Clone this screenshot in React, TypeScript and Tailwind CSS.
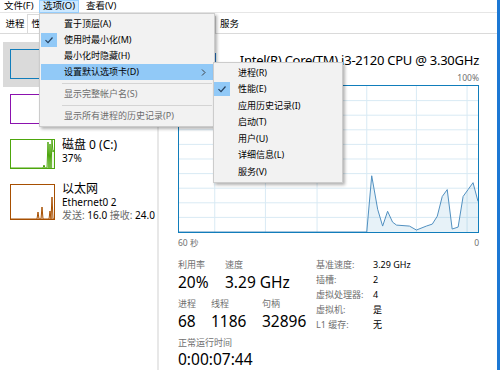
import React from "react";

const cpuLine: [number, number][] = [
  [0, 148], [189, 148], [194, 91], [200, 125], [205, 142], [210, 127], [215, 138],
  [219, 141], [232, 142], [239, 146], [249, 142], [255, 140], [260, 132], [265, 112],
  [270, 105], [275, 145], [281, 143], [286, 112], [291, 105], [296, 98], [301, 117],
];

function Check() {
  return (
    <svg width="16" height="14" viewBox="0 0 16 14" className="block">
      <path d="M4.5 7.2 L7 9.7 L11.5 4.5" fill="none" stroke="#25405e" strokeWidth="1.2" />
    </svg>
  );
}

function CpuChart() {
  const pts = cpuLine.map(([x, y]) => `${x},${y}`).join(" ");
  const rows = [1, 2, 3, 4, 5, 6, 7, 8, 9].map((i) => i * 14.8);
  const cols = [36, 87, 139, 189, 239, 290];
  return (
    <div className="h-[148px] w-[301px] border border-[#117dbb]">
      <svg width="299" height="146" viewBox="0 0 301 148" preserveAspectRatio="none" className="block">
        {rows.map((y) => (
          <line key={y} x1="0" x2="301" y1={y} y2={y} stroke="#d9eaf4" strokeWidth="1" />
        ))}
        {cols.map((x) => (
          <line key={x} x1={x} x2={x} y1="0" y2="148" stroke="#d9eaf4" strokeWidth="1" />
        ))}
        <polygon points={`${pts} 301,148`} fill="rgba(17,125,187,0.1)" />
        <polyline points={pts} fill="none" stroke="#4f8fbf" strokeWidth="1" />
      </svg>
    </div>
  );
}

function MiniGraph({ border, color, fill, h, points }: { border: string; color: string; fill: string; h: number; points: string }) {
  return (
    <div className={`ml-[10px] w-[45px] shrink-0 border ${border}`} style={{ height: h }}>
      {points && (
        <svg width="43" height={h - 2} viewBox={`0 0 43 ${h - 2}`} className="block">
          <polygon points={`${points} 43,${h - 2}`} fill={fill} />
          <polyline points={points} fill="none" stroke={color} strokeWidth="1" />
        </svg>
      )}
    </div>
  );
}

export default function App() {
  return (
    <div className="relative flex h-[370px] w-[500px] overflow-hidden bg-white font-['Noto_Sans','Noto_Sans_CJK_SC',sans-serif] text-black">
      <div className="flex w-[497px] flex-col">
        {/* menu bar */}
        <div className="flex h-[13px] items-center border-b border-[#e6e6e6] text-[9.5px] leading-none">
          <span className="w-[39px] pl-[4px]">文件(F)</span>
          <span className="flex h-[13px] w-[40px] items-center justify-center border border-[#99d1ff] bg-[#cce8ff]">选项(O)</span>
          <span className="pl-[7px]">查看(V)</span>
        </div>

        {/* tabs */}
        <div className="flex h-[21px] items-end border-b border-[#dadada] pl-[3px] text-[9.5px]">
          <div className="flex h-[17px] w-[24px] items-center justify-center">进程</div>
          <div className="flex h-[19px] w-[28px] items-center justify-center border border-b-0 border-[#dadada] bg-white">性能</div>
          <div className="flex h-[17px] w-[62px] items-center justify-center">应用历史记录</div>
          <div className="flex h-[17px] w-[26px] items-center justify-center">启动</div>
          <div className="flex h-[17px] w-[26px] items-center justify-center">用户</div>
          <div className="flex h-[17px] w-[47px] items-center justify-center border-r border-[#dadada]">详细信息</div>
          <div className="flex h-[17px] w-[27px] items-center justify-center">服务</div>
        </div>

        <div className="flex flex-1">
          {/* left list */}
          <div className="w-[159px] shrink-0 overflow-hidden border-r-2 border-[#e8e8e8] pt-[8px]">
            <div className="ml-[3px] flex h-[45px] bg-[#dadada] pt-[7px]">
              <div className="-ml-[3px] flex">
                <MiniGraph border="border-[#117dbb]" color="#117dbb" fill="rgba(17,125,187,0.1)" h={30} points="" />
              </div>
              <div className="ml-[7px] text-[12px] leading-[14px]">
                <div>CPU</div>
                <div className="text-[10px] leading-[12px]">20% 3.29 GHz</div>
              </div>
            </div>
            <div className="flex h-[45px] pt-[7px]">
              <MiniGraph border="border-[#8b12ae]" color="#8b12ae" fill="rgba(139,18,174,0.1)" h={30} points="" />
              <div className="ml-[7px] text-[12px] leading-[14px]">
                <div>内存</div>
                <div className="text-[10px] leading-[12px]">1.2/2.0 GB (60%)</div>
              </div>
            </div>
            <div className="flex h-[45px] pt-[7px]">
              <MiniGraph
                border="border-[#4da60c]"
                color="#4da60c"
                fill="rgba(77,166,12,0.1)"
                h={30}
                points="0,28 32,28 33,25 34,28 36,28 37,2 38,28 39,4 40,28 41,0 42,12 43,10"
              />
              <div className="ml-[7px] -mt-[1px] text-[12px] leading-[14px]">
                <div>磁盘 0 (C:)</div>
                <div className="text-[10px] leading-[12px]">37%</div>
              </div>
            </div>
            <div className="flex h-[45px] pt-[7px]">
              <MiniGraph
                border="border-[#a74f01]"
                color="#a74f01"
                fill="rgba(167,79,1,0.1)"
                h={36}
                points="0,34 26,34 27,27 28,34 30,34 31,22 32,34 38,34 39,26 40,34 41,12 42,34 43,34"
              />
              <div className="ml-[7px] -mt-[2px] whitespace-nowrap text-[12px] leading-[14px]">
                <div>以太网</div>
                <div className="text-[10px] leading-[12.5px]">Ethernet0 2</div>
                <div className="text-[10px] leading-[12.5px]">
                  <span className="text-[#6b6b6b]">发送: </span>16.0 <span className="text-[#6b6b6b]">接收: </span>24.0 Kbps
                </div>
              </div>
            </div>
          </div>

          {/* right detail */}
          <div className="flex-1 overflow-hidden pl-[19px] pr-[18px] pt-[16px]">
            <div className="flex h-[20px] items-center justify-between">
              <span className="text-[20px] leading-none">CPU</span>
              <span className="whitespace-nowrap text-[13px] leading-none tracking-[-0.25px]">Intel(R) Core(TM) i3-2120 CPU @ 3.30GHz</span>
            </div>
            <div className="flex h-[13px] items-end justify-between text-[8.5px] leading-[10px] text-[#707070]">
              <span>% 利用率</span>
              <span>100%</span>
            </div>
            <div className="mt-[2px]">
              <CpuChart />
            </div>
            <div className="mt-[4px] flex h-[12px] items-center justify-between text-[8.5px] text-[#707070]">
              <span>60 秒</span>
              <span>0</span>
            </div>

            <div className="mt-[10px] flex items-start">
              <div className="w-[138px] shrink-0">
                <div className="flex">
                  <div className="w-[47px]">
                    <div className="text-[9px] leading-[12px] text-[#707070]">利用率</div>
                    <div className="mt-[1px] text-[15.5px] leading-[20px]">20%</div>
                  </div>
                  <div>
                    <div className="text-[9px] leading-[12px] text-[#707070]">速度</div>
                    <div className="mt-[1px] whitespace-nowrap text-[15.5px] leading-[20px]">3.29 GHz</div>
                  </div>
                </div>
                <div className="mt-[6px] flex">
                  <div className="w-[33px]">
                    <div className="text-[9px] leading-[12px] text-[#707070]">进程</div>
                    <div className="mt-[1px] text-[15.5px] leading-[20px]">68</div>
                  </div>
                  <div className="w-[51px]">
                    <div className="text-[9px] leading-[12px] text-[#707070]">线程</div>
                    <div className="mt-[1px] text-[15.5px] leading-[20px]">1186</div>
                  </div>
                  <div>
                    <div className="text-[9px] leading-[12px] text-[#707070]">句柄</div>
                    <div className="mt-[1px] text-[15.5px] leading-[20px]">32896</div>
                  </div>
                </div>
                <div className="mt-[6px] text-[9px] leading-[12px] text-[#707070]">正常运行时间</div>
                <div className="text-[15.5px] leading-[20px]">0:00:07:44</div>
              </div>
              <div className="-mt-[2px] grid grid-cols-[57px_1fr] content-start text-[9px] leading-[15px]">
                <span className="text-[#707070]">基准速度:</span>
                <span>3.29 GHz</span>
                <span className="text-[#707070]">插槽:</span>
                <span>2</span>
                <span className="text-[#707070]">虚拟处理器:</span>
                <span>4</span>
                <span className="text-[#707070]">虚拟机:</span>
                <span>是</span>
                <span className="text-[#707070]">L1 缓存:</span>
                <span>无</span>
              </div>
            </div>
          </div>
        </div>
      </div>
      <div className="w-[3px] bg-[#1c78d4]" />

      {/* options menu */}
      <div className="absolute left-[39px] top-[13px] w-[176px] border border-[#cccccc] bg-[#f2f2f2] py-[2px] text-[9px] shadow-[2px_2px_3px_rgba(0,0,0,0.3)]">
        <div className="flex h-[16px] items-center pl-[24px]">置于顶层(A)</div>
        <div className="flex h-[16px] items-center">
          <div className="ml-[1px] w-[16px] bg-[#91c9f7]">
            <Check />
          </div>
          <span className="pl-[7px]">使用时最小化(M)</span>
        </div>
        <div className="flex h-[16px] items-center pl-[24px]">最小化时隐藏(H)</div>
        <div className="mx-[1px] flex h-[16px] items-center justify-between bg-[#91c9f7] pl-[23px] pr-[7px]">
          <span>设置默认选项卡(D)</span>
          <svg width="5" height="7" viewBox="0 0 5 7">
            <path d="M1 0.5 L4 3.5 L1 6.5" fill="none" stroke="#333" strokeWidth="0.9" />
          </svg>
        </div>
        <div className="flex h-[6px] items-center pl-[22px] pr-[2px]">
          <div className="h-px w-full bg-[#d4d4d4]" />
        </div>
        <div className="flex h-[16px] items-center pl-[24px] text-[#6d6d6d]">显示完整帐户名(S)</div>
        <div className="flex h-[6px] items-center pl-[22px] pr-[2px]">
          <div className="h-px w-full bg-[#d4d4d4]" />
        </div>
        <div className="flex h-[16px] items-center pl-[24px] text-[#6d6d6d]">显示所有进程的历史记录(P)</div>
      </div>

      {/* submenu */}
      <div className="absolute left-[213px] top-[62px] w-[130px] border border-[#cccccc] bg-[#f2f2f2] pb-[2px] pt-[1px] text-[9px] shadow-[2px_2px_3px_rgba(0,0,0,0.3)]">
        {["进程(R)", "性能(E)", "应用历史记录(I)", "启动(T)", "用户(U)", "详细信息(L)", "服务(V)"].map((t) => (
          <div key={t} className="flex h-[16.5px] items-center">
            {t === "性能(E)" ? (
              <div className="w-[16px] bg-[#91c9f7]">
                <Check />
              </div>
            ) : (
              <div className="w-[16px]" />
            )}
            <span className="pl-[8px]">{t}</span>
          </div>
        ))}
      </div>
    </div>
  );
}
